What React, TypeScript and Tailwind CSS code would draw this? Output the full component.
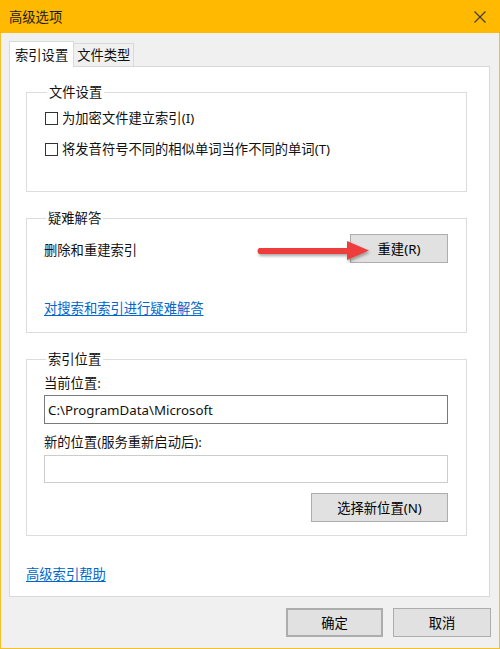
import React from 'react'

const font = { fontFamily: '"Noto Sans", "Noto Sans CJK SC", sans-serif' }

const Checkbox = ({ label }: { label: string }) => (
  <label className="flex items-center gap-[4px] h-[18px] leading-[18px]">
    <span className="w-[13px] h-[13px] border border-[#333333] bg-white shrink-0" />
    <span>{label}</span>
  </label>
)

const Button = ({ children, className = '' }: { children: React.ReactNode; className?: string }) => (
  <button
    type="button"
    className={`h-[29px] bg-[#e1e1e1] border border-[#adadad] text-[#000] leading-[18px] ${className}`}
  >
    {children}
  </button>
)

const Group = ({ title, children, className = '' }: { title: string; children: React.ReactNode; className?: string }) => (
  <fieldset className={`border border-[#dcdcdc] ${className}`}>
    <legend className="ml-[2px] px-[2px] leading-[18px]">{title}</legend>
    {children}
  </fieldset>
)

export default function App() {
  return (
    <div className="w-[500px] h-[649px] flex flex-col bg-[#f0f0f0] text-[13.3px] text-[#111]" style={font}>
      {/* Title bar */}
      <div className="h-[33px] bg-[#ffb900] flex items-center justify-between pl-[9px] pr-[14px] shrink-0">
        <span className="text-[#1a1a1a] leading-[18px]">高级选项</span>
        <svg width="12" height="12" viewBox="0 0 12 12" className="mt-[1px]">
          <path d="M0.5 0.5 L11.5 11.5 M11.5 0.5 L0.5 11.5" stroke="#3a3a3a" strokeWidth="1.1" />
        </svg>
      </div>

      {/* Body */}
      <div className="flex-1 flex flex-col border-x border-b border-[#f5c023] pl-[8px] pr-[9px] pt-[8px]">
        {/* Tabs */}
        <div className="flex items-end relative z-10 -mb-px">
          <div className="h-[26px] bg-white border border-b-0 border-[#d9d9d9] px-[5px] flex items-center leading-[18px]">
            索引设置
          </div>
          <div className="h-[23px] bg-[#f0f0f0] border-t border-r border-[#d9d9d9] px-[3px] flex items-center leading-[18px] mb-px">
            文件类型
          </div>
        </div>

        {/* Tab panel */}
        <div className="bg-white border border-[#d9d9d9] pl-[16px] pr-[22px] pt-[16px] pb-[13px] relative">
          <Group title="文件设置" className="pl-[18px] pt-[8px] pb-[33px]">
            <div className="flex flex-col gap-[13px]">
              <Checkbox label="为加密文件建立索引(I)" />
              <Checkbox label="将发音符号不同的相似单词当作不同的单词(T)" />
            </div>
          </Group>

          <Group title="疑难解答" className="mt-[17px] pl-[17px] pr-[18px] pt-[7px] pb-[15px]">
            <div className="flex items-center justify-between h-[29px]">
              <span className="leading-[18px] pt-[2px]">删除和重建索引</span>
              <Button className="w-[98px]">重建(R)</Button>
            </div>
            <a className="block mt-[36px] leading-[18px] text-[#0066cc] underline underline-offset-2 w-fit">
              对搜索和索引进行疑难解答
            </a>
          </Group>

          <Group title="索引位置" className="mt-[17px] pl-[17px] pr-[18px] pt-[6px] pb-[13px]">
            <div className="leading-[18px]">当前位置:</div>
            <div className="mt-[3px] h-[29px] border border-[#7a7a7a] bg-white flex items-center pl-[3px] leading-[18px]">
              C:\ProgramData\Microsoft
            </div>
            <div className="mt-[9px] leading-[18px]">新的位置(服务重新启动后):</div>
            <div className="mt-[4px] h-[28px] border border-[#cccccc] bg-white" />
            <div className="flex justify-end mt-[10px]">
              <Button className="w-[137px]">选择新位置(N)</Button>
            </div>
          </Group>

          <a className="block mt-[29px] leading-[18px] text-[#0066cc] underline underline-offset-2 w-fit">
            高级索引帮助
          </a>

          {/* Red annotation arrow */}
          <svg
            className="absolute left-[244px] top-[170px] pointer-events-none"
            width="124"
            height="28"
            viewBox="0 0 124 28"
          >
            <defs>
              <filter id="sh" x="-10%" y="-40%" width="130%" height="190%">
                <feDropShadow dx="1" dy="2" stdDeviation="1.5" floodColor="#000" floodOpacity="0.35" />
              </filter>
            </defs>
            <g filter="url(#sh)">
              <path d="M5 11 L96 11 L96 17 L5 17 Q2 14 5 11 Z" fill="#ee3c3c" />
              <path d="M93 4 L115 13.5 L93 23 Z" fill="#ee3c3c" />
            </g>
          </svg>
        </div>

        {/* Dialog buttons */}
        <div className="flex justify-end gap-[10px] mt-[11px] -mr-px">
          <Button className="w-[97px] border-2 border-[#0078d7]">确定</Button>
          <Button className="w-[98px]">取消</Button>
        </div>
      </div>
    </div>
  )
}
